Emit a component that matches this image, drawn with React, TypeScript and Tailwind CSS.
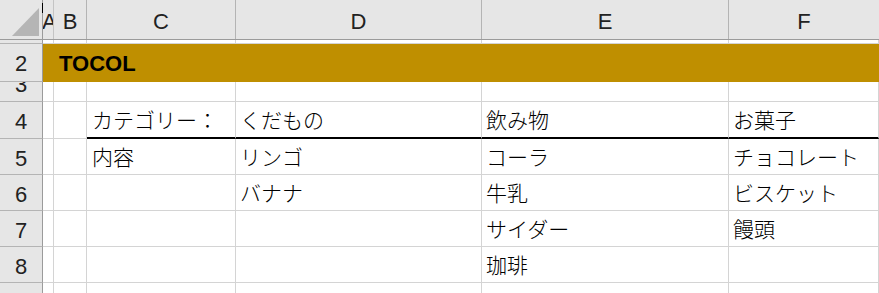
const hdrFont = { fontFamily: "'Liberation Sans', Arial, sans-serif" };

type DataRow = { n: string; cells: string[] };

const dataRows: DataRow[] = [
  { n: "5", cells: ["内容", "リンゴ", "コーラ", "チョコレート"] },
  { n: "6", cells: ["", "バナナ", "牛乳", "ビスケット"] },
  { n: "7", cells: ["", "", "サイダー", "饅頭"] },
  { n: "8", cells: ["", "", "珈琲", ""] },
];

function RowHead({ n, h }: { n: string; h: string }) {
  return (
    <div
      className={`w-[43px] ${h} shrink-0 flex justify-center bg-[#e6e6e6] border-r border-r-[#9b9b9b] border-b border-b-[#b4b4b4] text-[22px] text-[#222] leading-none pt-[9px]`}
    >
      {n}
    </div>
  );
}

function Cell({ w, children, thick }: { w: string; children?: React.ReactNode; thick?: boolean }) {
  return (
    <div
      className={`${w} shrink-0 flex items-center pl-[4px] border-r border-r-[#d4d4d4] whitespace-nowrap ${
        thick ? "border-b-2 border-b-black" : "border-b border-b-[#d4d4d4]"
      }`}
    >
      {children}
    </div>
  );
}

export default function App() {
  return (
    <div
      className="w-[879px] h-[293px] overflow-hidden bg-white text-black flex flex-col font-light"
      style={{ fontFamily: "'Noto Sans CJK JP', 'Noto Sans', sans-serif" }}
    >
      {/* column letters */}
      <div className="flex h-[40px] shrink-0 bg-[#e6e6e6] border-b border-b-[#9b9b9b] text-[22px] text-[#222] font-normal" style={hdrFont}>
        <div className="relative w-[43px] shrink-0 border-r border-r-[#9b9b9b]">
          <svg width="43" height="39" className="block">
            <polygon points="12,36 39,36 39,8" fill="#b5b5b5" />
          </svg>
          <span className="absolute right-[-1px] top-[3px] w-px h-[10px] bg-black" />
        </div>
        <div className="w-[11px] shrink-0 overflow-hidden flex items-center pt-[3px] border-r border-r-[#c4c4c4]">
          <span className="-ml-[1px]">A</span>
        </div>
        <div className="w-[33px] shrink-0 flex items-center justify-center pt-[3px] border-r border-r-[#b4b4b4]">B</div>
        <div className="w-[149px] shrink-0 flex items-center justify-center pt-[3px] border-r border-r-[#b4b4b4]">C</div>
        <div className="w-[246px] shrink-0 flex items-center justify-center pt-[3px] border-r border-r-[#b4b4b4]">D</div>
        <div className="w-[247px] shrink-0 flex items-center justify-center pt-[3px] border-r border-r-[#b4b4b4]">E</div>
        <div className="flex-1 flex items-center justify-center pt-[3px]">F</div>
      </div>

      {/* hidden row 1 */}
      <div className="flex h-[4px] shrink-0">
        <div className="w-[43px] shrink-0 bg-[#e6e6e6] border-r border-r-[#9b9b9b] border-b border-b-[#b4b4b4]" />
        <Cell w="w-[11px]" />
        <Cell w="w-[33px]" />
        <Cell w="w-[149px]" />
        <Cell w="w-[246px]" />
        <Cell w="w-[247px]" />
        <Cell w="flex-1" />
      </div>

      {/* title band */}
      <div className="flex h-[38px] shrink-0 font-normal" style={hdrFont}>
        <RowHead n="2" h="h-[38px]" />
        <div className="flex-1 bg-[#bf8f00] flex items-center pl-[16px] text-[22px] font-bold">TOCOL</div>
      </div>

      {/* short row 3 */}
      <div className="flex h-[20px] shrink-0">
        <div
          className="w-[43px] h-[20px] shrink-0 overflow-hidden flex justify-center bg-[#e6e6e6] border-r border-r-[#9b9b9b] border-b border-b-[#b4b4b4] text-[22px] text-[#222] leading-none font-normal"
          style={hdrFont}
        >
          <span className="-mt-[8px]">3</span>
        </div>
        <Cell w="w-[11px]" />
        <Cell w="w-[33px]" />
        <Cell w="w-[149px]" />
        <Cell w="w-[246px]" />
        <Cell w="w-[247px]" />
        <Cell w="flex-1" />
      </div>

      {/* category header */}
      <div className="flex h-[37px] shrink-0 text-[21px]">
        <div className="font-normal" style={hdrFont}>
          <RowHead n="4" h="h-[37px]" />
        </div>
        <Cell w="w-[11px]" />
        <Cell w="w-[33px]" />
        <Cell w="w-[149px]" thick>
          <span className="pl-[1px]">カテゴリー：</span>
        </Cell>
        <Cell w="w-[246px]" thick>くだもの</Cell>
        <Cell w="w-[247px]" thick>飲み物</Cell>
        <Cell w="flex-1" thick>お菓子</Cell>
      </div>

      {dataRows.map((r) => (
        <div key={r.n} className="flex h-[36px] shrink-0 text-[21px]">
          <div className="font-normal" style={hdrFont}>
            <RowHead n={r.n} h="h-[36px]" />
          </div>
          <Cell w="w-[11px]" />
          <Cell w="w-[33px]" />
          <Cell w="w-[149px]">
            <span className="pl-[1px]">{r.cells[0]}</span>
          </Cell>
          <Cell w="w-[246px]">{r.cells[1]}</Cell>
          <Cell w="w-[247px]">{r.cells[2]}</Cell>
          <Cell w="flex-1">{r.cells[3]}</Cell>
        </div>
      ))}

      {/* row 9, cut off */}
      <div className="flex h-[36px] shrink-0">
        <div className="font-normal" style={hdrFont}>
          <RowHead n="9" h="h-[36px]" />
        </div>
        <Cell w="w-[11px]" />
        <Cell w="w-[33px]" />
        <Cell w="w-[149px]" />
        <Cell w="w-[246px]" />
        <Cell w="w-[247px]" />
        <Cell w="flex-1" />
      </div>
    </div>
  );
}
